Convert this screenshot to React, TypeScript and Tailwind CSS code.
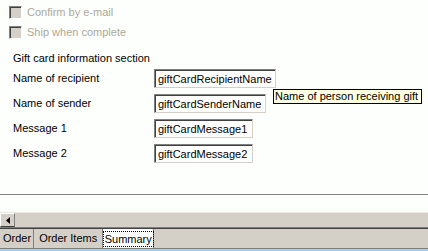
import React from 'react';

const Check: React.FC<{ label: string }> = ({ label }) => (
  <div className="flex items-center h-[20px] pl-[9px]">
    <div className="w-[13px] h-[13px] bg-[#d4d0c8] border-t border-l border-[#808080] border-b-white border-r-white border-b border-r shadow-[inset_1px_1px_0_#404040]" />
    <span className="ml-[5px] text-[#aca899]">{label}</span>
  </div>
);

const Row: React.FC<{ label: string; value: string; width: string }> = ({ label, value, width }) => (
  <div className="flex items-center h-[25px] pl-[13px]">
    <span className="w-[141px]">{label}</span>
    <div className={`h-[19px] ${width} bg-white border-t border-l border-[#808080] border-b border-r border-b-[#d4d0c8] border-r-[#d4d0c8] shadow-[inset_1px_1px_0_#404040] flex items-center pl-[3px] pt-[1px] whitespace-nowrap`}>
      {value}
    </div>
  </div>
);

export default function App() {
  return (
    <div className="w-[428px] h-[251px] bg-[#fdfffd] flex flex-col text-[11px] text-black relative overflow-hidden" style={{ fontFamily: 'Tahoma, "Liberation Sans", Arial, sans-serif' }}>
      <div className="pt-[2px]">
        <Check label="Confirm by e-mail" />
        <Check label="Ship when complete" />
      </div>
      <div className="pl-[13px] mt-[8px] h-[16px] flex items-center">Gift card information section</div>
      <div>
        <Row label="Name of recipient" value="giftCardRecipientName" width="w-[122px]" />
        <Row label="Name of sender" value="giftCardSenderName" width="w-[112px]" />
        <Row label="Message 1" value="giftCardMessage1" width="w-[99px]" />
        <Row label="Message 2" value="giftCardMessage2" width="w-[99px]" />
      </div>
      <div className="mt-[28px] h-px bg-[#808080]" />
      <div className="flex-1" />
      {/* horizontal scrollbar */}
      <div className="h-[15px] bg-[#d4d0c8] border-t border-[#e8e6e0] flex">
        <div className="w-[15px] h-[14px] bg-[#d4d0c8] border-t border-l border-white border-b border-r border-b-[#404040] border-r-[#808080] flex items-center justify-center">
          <svg width="4" height="7" viewBox="0 0 4 7"><path d="M4 0 L0 3.5 L4 7 Z" fill="black" /></svg>
        </div>
      </div>
      <div className="h-px bg-[#808080]" />
      <div className="h-px bg-[#404040]" />
      {/* tab strip */}
      <div className="h-[19px] bg-[#d4d0c8] flex items-stretch">
        <div className="pl-[3px] pr-[2px] flex items-center border-r border-[#808080]">Order</div>
        <div className="px-[5px] flex items-center border-r border-[#808080]">Order Items</div>
        <div className="w-[51px] bg-white flex items-center justify-center border-r border-[#808080]">
          <span className="border border-dotted border-black px-[1px] leading-[14px]">Summary</span>
        </div>
      </div>
      <div className="h-px bg-[#808080]" />
      <div className="h-[2px] bg-[#a6caf0]" />
      {/* tooltip */}
      <div className="absolute left-[273px] top-[89px] h-[15px] w-[149px] bg-[#ffffe1] border border-black flex items-center pl-[1px] whitespace-nowrap">
        Name of person receiving gift
      </div>
    </div>
  );
}
